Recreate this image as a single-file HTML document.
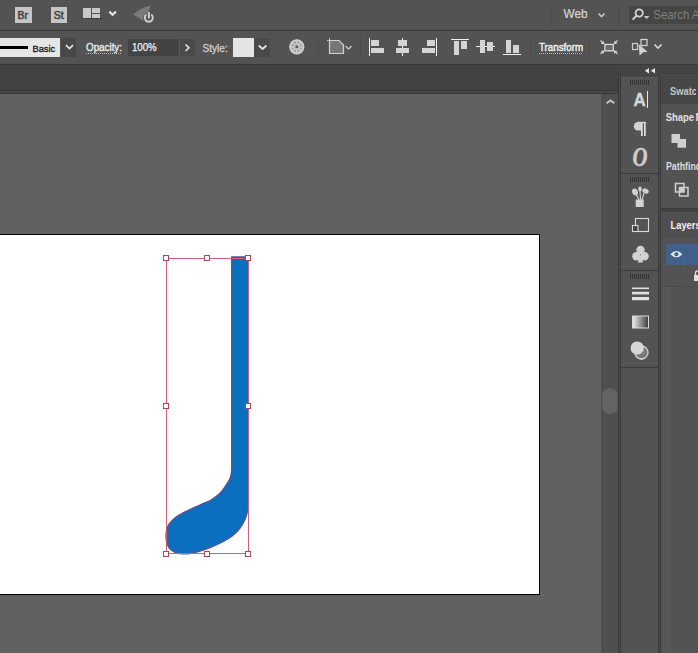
<!DOCTYPE html>
<html><head><meta charset="utf-8">
<style>
html,body{margin:0;padding:0;}
body{width:698px;height:653px;overflow:hidden;background:#535353;position:relative;font-family:"Liberation Sans",sans-serif;}
svg{position:absolute;left:0;top:0;display:block;}
.t{font-family:"Liberation Sans",sans-serif;}
</style></head><body>
<svg width="698" height="653" viewBox="0 0 698 653">
<g shape-rendering="crispEdges">
<!-- menubar -->
<rect x="0" y="0" width="698" height="30" fill="#535353"/>
<rect x="0" y="30" width="698" height="1" fill="#383838"/>
<!-- control bar -->
<rect x="0" y="31" width="698" height="33" fill="#535353"/>
<rect x="0" y="64" width="698" height="1" fill="#383838"/>
<!-- tab bar -->
<rect x="0" y="65" width="698" height="25" fill="#424242"/>
<rect x="0" y="90" width="618" height="1" fill="#393939"/>
<rect x="0" y="91" width="618" height="2" fill="#474747"/>
<rect x="0" y="93" width="618" height="1" fill="#383838"/>
<!-- canvas -->
<rect x="0" y="94" width="601" height="559" fill="#616161"/>
<!-- scroll track -->
<rect x="601" y="94" width="17" height="559" fill="#4f4f4f"/>
<rect x="618" y="94" width="3" height="559" fill="#3b3b3b"/>
</g>

<!-- menubar items -->
<rect x="15" y="7" width="17" height="16" fill="#c6c6c6"/>
<text x="17.6" y="19" font-family="Liberation Sans" font-size="11.5" fill="#474747" stroke="#474747" stroke-width="0.6" textLength="10.4" lengthAdjust="spacingAndGlyphs">Br</text>
<rect x="51" y="7" width="16" height="16" fill="#c6c6c6"/>
<text x="53.8" y="19" font-family="Liberation Sans" font-size="11.5" fill="#474747" stroke="#474747" stroke-width="0.6" textLength="10" lengthAdjust="spacingAndGlyphs">St</text>
<g fill="#c8c8c8" shape-rendering="crispEdges">
<rect x="83" y="8" width="8" height="10"/>
<rect x="92" y="8" width="8" height="5"/>
<rect x="92" y="14" width="8" height="4"/>
<rect x="81" y="18" width="22" height="1" fill="#3e3e3e"/>
</g>
<path d="M109.3,11.6 L112.6,14.8 L115.9,11.6" fill="none" stroke="#e0e0e0" stroke-width="2.2"/>
<!-- gpu icon -->
<path d="M133,14.5 Q142,7 150.5,5.5 Q149,12 143,21 L138,17.5 Z" fill="#7a7a7a"/>
<circle cx="148.8" cy="18" r="3.9" fill="none" stroke="#535353" stroke-width="3.5"/><path d="M146.4,14.6 A4,4 0 1 0 151.2,14.6" fill="none" stroke="#cfcfcf" stroke-width="1.9"/>
<rect x="147.9" y="12" width="1.9" height="6.5" fill="#d4d4d4"/>
<!-- workspace -->
<text x="563.5" y="18" font-family="Liberation Sans" font-size="12.5" fill="#d8d8d8" stroke="#d8d8d8" stroke-width="0.2" textLength="24" lengthAdjust="spacingAndGlyphs">Web</text>
<path d="M598.5,13.5 L601.5,16.5 L604.5,13.5" fill="none" stroke="#c8c8c8" stroke-width="1.6"/>
<rect x="550" y="4" width="1" height="22" fill="#4a4a4a"/>
<rect x="618" y="4" width="1" height="22" fill="#4a4a4a"/>
<!-- search -->
<rect x="629" y="6" width="69" height="18" fill="#454545"/>
<circle cx="639.2" cy="13" r="3.6" fill="none" stroke="#d4d4d4" stroke-width="1.8"/>
<path d="M636.6,15.6 L632.6,19.6" stroke="#d4d4d4" stroke-width="2"/>
<path d="M643.8,16 L649.6,16 L646.7,19 Z" fill="#c8c8c8"/>
<text x="653.3" y="19.2" font-family="Liberation Sans" font-size="13" fill="#7e7e7e" textLength="52.5" lengthAdjust="spacingAndGlyphs">Search Ad</text>

<!-- control bar -->
<rect x="0" y="38" width="60" height="19" fill="#e6e6e6"/>
<rect x="0" y="46" width="28" height="3" fill="#000"/>
<text x="32.5" y="51.6" font-family="Liberation Sans" font-size="9.8" fill="#111" stroke="#111" stroke-width="0.3" textLength="22.6" lengthAdjust="spacingAndGlyphs">Basic</text>
<rect x="61" y="38" width="15" height="19" fill="#484848"/>
<path d="M66,45.2 L69.5,48.6 L73,45.2" fill="none" stroke="#e0e0e0" stroke-width="1.8"/>
<text x="86" y="51.2" font-family="Liberation Sans" font-size="10.8" fill="#e4e4e4" stroke="#e4e4e4" stroke-width="0.45" textLength="36" lengthAdjust="spacingAndGlyphs">Opacity:</text>
<path d="M86,53.5 L122,53.5" stroke="#bdbdbd" stroke-width="1" stroke-dasharray="1,1"/>
<rect x="128" y="39" width="51" height="17" fill="#434343"/>
<rect x="179" y="39" width="1" height="17" fill="#5a5a5a"/>
<rect x="180" y="39" width="15" height="17" fill="#4a4a4a"/>
<text x="132" y="51.2" font-family="Liberation Sans" font-size="10.8" fill="#f2f2f2" stroke="#f2f2f2" stroke-width="0.25" textLength="24.7" lengthAdjust="spacingAndGlyphs">100%</text>
<path d="M185.5,44.5 L189,47.8 L185.5,51" fill="none" stroke="#e0e0e0" stroke-width="1.6"/>
<text x="202.5" y="51.8" font-family="Liberation Sans" font-size="10.8" fill="#c8c8c8" stroke="#c8c8c8" stroke-width="0.4" textLength="25.2" lengthAdjust="spacingAndGlyphs">Style:</text>
<rect x="233" y="38" width="21" height="19" fill="#e4e4e4"/>
<rect x="254" y="38" width="16" height="19" fill="#4a4a4a"/>
<path d="M258.8,45.5 L262.6,49 L266.4,45.5" fill="none" stroke="#e0e0e0" stroke-width="1.9"/>
<!-- recolor globe -->
<circle cx="296.8" cy="46.8" r="7.6" fill="#cfcfcf"/>
<circle cx="296.8" cy="46.8" r="5.8" fill="#a8a8a8"/>
<g stroke="#cfcfcf" stroke-width="1.3">
<path d="M296.8,39.5 V54.1 M289.5,46.8 H304.1 M291.6,41.6 L302,52 M302,41.6 L291.6,52"/>
</g>
<circle cx="296.8" cy="46.8" r="1.5" fill="#555"/>
<!-- separators -->
<rect x="318" y="36" width="1" height="23" fill="#4c4c4c"/>
<!-- doc setup icon -->
<path d="M329.5,40.5 H339 L343.5,45 V53.5 H329.5 Z" fill="#777" stroke="#d0d0d0" stroke-width="1.2"/>
<path d="M327,40.5 H329.5 M329.5,38 V40.5" stroke="#c0c0c0" stroke-width="1"/>
<path d="M345.5,46 L348.5,49 L351.5,46" fill="none" stroke="#c8c8c8" stroke-width="1.4"/>
<rect x="360" y="36" width="1" height="23" fill="#4c4c4c"/>
<!-- align icons -->
<g fill="#d4d4d4" shape-rendering="crispEdges">
<rect x="369" y="38" width="1" height="18" fill="#f0f0f0"/>
<rect x="371" y="40" width="8" height="6"/>
<rect x="371" y="48" width="13" height="5"/>
<rect x="402" y="38" width="1" height="18" fill="#f0f0f0"/>
<rect x="398" y="40" width="9" height="6"/>
<rect x="396" y="48" width="13" height="5"/>
<rect x="436" y="38" width="1" height="18" fill="#f0f0f0"/>
<rect x="427" y="40" width="8" height="6"/>
<rect x="422" y="48" width="13" height="5"/>
<rect x="451" y="39" width="18" height="1" fill="#f0f0f0"/>
<rect x="454" y="41" width="5" height="14"/>
<rect x="461" y="41" width="6" height="8"/>
<rect x="476" y="46" width="19" height="1" fill="#f0f0f0"/>
<rect x="480" y="40" width="5" height="13"/>
<rect x="487" y="42" width="6" height="9"/>
<rect x="503" y="54" width="18" height="1" fill="#f0f0f0"/>
<rect x="506" y="40" width="5" height="13"/>
<rect x="513" y="45" width="6" height="8"/>
</g>
<rect x="530" y="36" width="1" height="23" fill="#4c4c4c"/>
<text x="539" y="51.2" font-family="Liberation Sans" font-size="10.8" fill="#f0f0f0" stroke="#f0f0f0" stroke-width="0.45" textLength="44" lengthAdjust="spacingAndGlyphs">Transform</text>
<path d="M539,53.5 L583,53.5" stroke="#bdbdbd" stroke-width="1" stroke-dasharray="1,1"/>
<rect x="589" y="36" width="1" height="23" fill="#4c4c4c"/>
<!-- isolate icon -->
<rect x="604.9" y="44.4" width="8.4" height="6.4" fill="#6a6a6a" stroke="#dadada" stroke-width="1.3"/>
<g stroke="#cfcfcf" stroke-width="1.2">
<path d="M600.5,40.5 L603.5,43.5 M617.5,40.5 L614.5,43.5 M600.5,54 L603.5,51 M617.5,54 L614.5,51"/>
</g>
<g fill="#d6d6d6">
<path d="M604.3,44.3 L600.8,43.8 L603.8,40.8 Z"/>
<path d="M613.9,44.3 L617.4,43.8 L614.4,40.8 Z"/>
<path d="M604.3,50.4 L600.8,50.9 L603.8,53.9 Z"/>
<path d="M613.9,50.4 L617.4,50.9 L614.4,53.9 Z"/>
</g>
<!-- transform each icon -->
<rect x="632.5" y="43.5" width="5" height="6" fill="none" stroke="#d0d0d0" stroke-width="1.2"/>
<rect x="641" y="39.5" width="6" height="6" fill="none" stroke="#d8d8d8" stroke-width="1.2"/>
<path d="M638.6,44 L647.5,51.8 L643.2,52.2 L639.6,55.6 Z" fill="#d2d2d2"/>
<path d="M654.5,44.5 L658,48 L661.5,44.5" fill="none" stroke="#d8d8d8" stroke-width="1.6"/>

<!-- dock header -->
<rect x="618" y="65" width="80" height="12" fill="#444444"/>
<path d="M649,68 L644.8,70.7 L649,73.4 Z M655,68 L650.8,70.7 L655,73.4 Z" fill="#e4e4e4"/>
<!-- dock col frame -->
<rect x="618" y="72" width="1" height="581" fill="#3a3a3a"/>
<rect x="619" y="72" width="1" height="581" fill="#4a4a4a"/>
<rect x="620" y="72" width="1" height="581" fill="#3a3a3a"/>
<rect x="621" y="77" width="37" height="576" fill="#535353"/>
<rect x="658" y="76" width="1" height="577" fill="#3a3a3a"/>
<rect x="659" y="76" width="1" height="577" fill="#4a4a4a"/>
<rect x="660" y="76" width="1" height="577" fill="#3a3a3a"/>
<rect x="661" y="75" width="37" height="1" fill="#4e4e4e"/>
<rect x="621" y="77" width="37" height="1" fill="#5a5a5a"/>
<rect x="621" y="169" width="37" height="1" fill="#5a5a5a"/>
<rect x="621" y="173" width="37" height="1" fill="#3c3c3c"/>
<rect x="621" y="266" width="37" height="1" fill="#5a5a5a"/>
<rect x="621" y="270" width="37" height="1" fill="#3c3c3c"/>
<rect x="621" y="363" width="37" height="1" fill="#5a5a5a"/>
<rect x="621" y="367" width="37" height="1" fill="#3c3c3c"/>
<g fill="#343434" shape-rendering="crispEdges"><rect x="630" y="80" width="1" height="5"/><rect x="632" y="80" width="1" height="5"/><rect x="634" y="80" width="1" height="5"/><rect x="636" y="80" width="1" height="5"/><rect x="638" y="80" width="1" height="5"/><rect x="640" y="80" width="1" height="5"/><rect x="642" y="80" width="1" height="5"/><rect x="644" y="80" width="1" height="5"/><rect x="646" y="80" width="1" height="5"/><rect x="648" y="80" width="1" height="5"/></g><g fill="#343434" shape-rendering="crispEdges"><rect x="630" y="177" width="1" height="5"/><rect x="632" y="177" width="1" height="5"/><rect x="634" y="177" width="1" height="5"/><rect x="636" y="177" width="1" height="5"/><rect x="638" y="177" width="1" height="5"/><rect x="640" y="177" width="1" height="5"/><rect x="642" y="177" width="1" height="5"/><rect x="644" y="177" width="1" height="5"/><rect x="646" y="177" width="1" height="5"/><rect x="648" y="177" width="1" height="5"/></g><g fill="#343434" shape-rendering="crispEdges"><rect x="630" y="274" width="1" height="5"/><rect x="632" y="274" width="1" height="5"/><rect x="634" y="274" width="1" height="5"/><rect x="636" y="274" width="1" height="5"/><rect x="638" y="274" width="1" height="5"/><rect x="640" y="274" width="1" height="5"/><rect x="642" y="274" width="1" height="5"/><rect x="644" y="274" width="1" height="5"/><rect x="646" y="274" width="1" height="5"/><rect x="648" y="274" width="1" height="5"/></g>
<!-- right panel -->
<rect x="661" y="77" width="37" height="576" fill="#535353"/>
<rect x="661" y="77" width="37" height="27" fill="#474747"/>
<text x="670" y="94.6" font-family="Liberation Sans" font-weight="bold" font-size="10.8" fill="#c4c4c4" textLength="43" lengthAdjust="spacingAndGlyphs">Swatches</text>
<rect x="696" y="78" width="2" height="26" fill="#474747"/>
<text x="665.7" y="120.8" font-family="Liberation Sans" font-weight="bold" font-size="11" fill="#e2e2e2" textLength="28.3" lengthAdjust="spacingAndGlyphs">Shape</text><text x="695.5" y="120.8" font-family="Liberation Sans" font-weight="bold" font-size="11" fill="#e2e2e2">M</text>
<text x="666" y="169.8" font-family="Liberation Sans" font-weight="bold" font-size="10.6" fill="#dcdcdc" textLength="48.4" lengthAdjust="spacingAndGlyphs">Pathfinders</text>
<rect x="661" y="208" width="37" height="1" fill="#383838"/>
<rect x="661" y="209" width="37" height="3" fill="#474747"/>
<rect x="661" y="210" width="37" height="1" fill="#3d3d3d"/>
<rect x="661" y="212" width="37" height="26" fill="#4f4f4f"/>
<text x="670.6" y="228.6" font-family="Liberation Sans" font-weight="bold" font-size="10.8" fill="#f2f2f2" textLength="30" lengthAdjust="spacingAndGlyphs">Layers</text>
<rect x="666" y="244" width="32" height="21" fill="#41618a"/>
<rect x="665" y="265" width="33" height="22" fill="#535353"/>
<rect x="665" y="286" width="33" height="1" fill="#4a4a4a"/>
<rect x="687" y="244" width="1" height="21" fill="#3f5c84"/><rect x="687" y="265" width="1" height="22" fill="#4f4f4f"/>
<rect x="662" y="287" width="9" height="366" fill="#575757"/>

<!-- scrollbar -->
<path d="M606.6,103.2 L610.5,100.4 L614.4,103.2" fill="none" stroke="#c4c4c4" stroke-width="2"/>
<rect x="602.5" y="388.5" width="15" height="25.5" rx="6.5" ry="6.5" fill="#646464" stroke="#5a5a5a" stroke-width="1"/>
<!-- dock icons group1 -->
<text x="633.4" y="106" font-family="Liberation Sans" font-weight="bold" font-size="18" fill="#d4d4d4" stroke="#d4d4d4" stroke-width="0.4" stroke-linejoin="round" textLength="12.2" lengthAdjust="spacingAndGlyphs">A</text>
<rect x="647" y="91" width="1" height="17" fill="#e8e8e8"/>
<path d="M641.5,122 H638 A4.2,4.25 0 0 0 638,130.5 H641.5 Z" fill="#d2d2d2"/>
<rect x="637" y="121.8" width="8.6" height="1.3" fill="#d8d8d8"/>
<rect x="641" y="122" width="1.7" height="14" fill="#e0e0e0"/>
<rect x="644" y="122" width="1.7" height="14" fill="#e0e0e0"/>
<text x="632.5" y="165.6" font-family="Liberation Serif" font-style="italic" font-weight="bold" font-size="26.5" fill="#cfcfcf" stroke="#cfcfcf" stroke-width="0.4" textLength="15" lengthAdjust="spacingAndGlyphs">O</text>
<!-- group2 -->
<rect x="635.7" y="199.5" width="8" height="7.5" fill="#d4d4d4"/>
<ellipse cx="635" cy="192" rx="2.8" ry="3.6" transform="rotate(-25 635 192)" fill="#d0d0d0"/>
<ellipse cx="640" cy="189" rx="1.8" ry="2.4" fill="#d0d0d0"/>
<ellipse cx="645.5" cy="191" rx="3.3" ry="2.5" transform="rotate(20 645.5 191)" fill="#d0d0d0"/>
<path d="M636,194 L639,200 M640,191 L640.5,200 M644,193 L642,200" stroke="#cfcfcf" stroke-width="1.2"/>
<rect x="635.5" y="218.5" width="13" height="13" fill="none" stroke="#d8d8d8" stroke-width="1.1"/>
<rect x="632.5" y="225.5" width="5.5" height="6" fill="#444" stroke="#d8d8d8" stroke-width="1.1"/>
<circle cx="640.5" cy="250" r="4.2" fill="#d2d2d2"/>
<circle cx="636.4" cy="256.3" r="4.2" fill="#d2d2d2"/>
<circle cx="644.6" cy="256.3" r="4.2" fill="#d2d2d2"/>
<path d="M639.5,256 L638,262.5 H643 L641.5,256 Z" fill="#d2d2d2"/>
<!-- group3 -->
<rect x="632" y="287.5" width="17" height="1.6" fill="#e0e0e0"/>
<rect x="632" y="291.8" width="17" height="2.6" fill="#e0e0e0"/>
<rect x="632" y="297" width="17" height="3.2" fill="#e0e0e0"/>
<defs><linearGradient id="gr" x1="0" x2="1" y1="0" y2="0"><stop offset="0" stop-color="#f0f0f0"/><stop offset="1" stop-color="#3a3a3a"/></linearGradient></defs>
<rect x="632.5" y="316" width="16" height="12" fill="url(#gr)" stroke="#d8d8d8" stroke-width="1"/>
<circle cx="641.5" cy="352.5" r="6.5" fill="#7a7a7a" stroke="#cfcfcf" stroke-width="1.3"/>
<circle cx="637.2" cy="348" r="6.6" fill="#d6d6d6"/>
<circle cx="641.5" cy="352.5" r="6.5" fill="none" stroke="#cfcfcf" stroke-width="1.3" stroke-dasharray="0 6 14 30"/>
<!-- right panel icons -->
<g fill="#d0d0d0">
<rect x="671.5" y="134" width="8.5" height="9"/>
<rect x="677.5" y="139" width="8.5" height="8.7"/>
</g>
<rect x="675.5" y="183.5" width="8.5" height="8.5" fill="none" stroke="#d0d0d0" stroke-width="1.5"/>
<rect x="679.5" y="187.5" width="8.5" height="8.5" fill="none" stroke="#d0d0d0" stroke-width="1.5"/>
<rect x="679.5" y="187.5" width="4.5" height="4.5" fill="#d0d0d0"/>
<!-- layers eye -->
<path d="M670.4,254.2 Q676.4,248 682.4,254.2 Q676.4,260.4 670.4,254.2 Z" fill="#dce6f0"/>
<circle cx="676.4" cy="254.2" r="2" fill="#41618a"/>
<rect x="694" y="275" width="6" height="6" fill="#e0e0e0"/>
<path d="M695.5,275 V273 Q695.5,271 697.5,271 Q699.5,271 699.5,273 V275" fill="none" stroke="#e0e0e0" stroke-width="1.3"/>
<!-- artboard -->
<g shape-rendering="crispEdges">
<rect x="0" y="234" width="540" height="361" fill="#000"/>
<rect x="0" y="235" width="539" height="359" fill="#fff"/>
</g>

<!-- artwork -->
<path d="M231.7,257 L248.2,257 L248.2,500 C248.10,503.83 248.17,507.67 247.60,511.00 C247.03,514.33 246.12,517.07 244.80,520.00 C243.48,522.93 241.80,525.93 239.70,528.60 C237.60,531.27 235.25,533.68 232.20,536.00 C229.15,538.32 224.98,540.62 221.40,542.50 C217.82,544.38 214.27,545.85 210.70,547.30 C207.13,548.75 203.45,550.17 200.00,551.20 C196.55,552.23 193.00,553.05 190.00,553.50 C187.00,553.95 184.50,554.08 182.00,553.90 C179.50,553.72 177.00,553.23 175.00,552.40 C173.00,551.57 171.33,550.33 170.00,548.90 C168.67,547.47 167.67,545.82 167.00,543.80 C166.33,541.78 166.07,539.13 166.00,536.80 C165.93,534.47 166.07,531.95 166.60,529.80 C167.13,527.65 167.82,525.88 169.20,523.90 C170.58,521.92 172.28,519.90 174.90,517.90 C177.52,515.90 180.75,514.05 184.90,511.90 C189.05,509.75 195.45,506.98 199.80,505.00 C204.15,503.02 208.07,501.60 211.00,500.00 C213.93,498.40 215.57,496.93 217.40,495.40 C219.23,493.87 220.47,492.63 222.00,490.80 C223.53,488.97 225.23,486.53 226.60,484.40 C227.97,482.27 229.38,480.15 230.20,478.00 C231.02,475.85 231.25,473.83 231.50,471.50 C231.75,469.17 231.67,467.58 231.70,464.00 Z" fill="#0b6fc0" stroke="#5a5294" stroke-width="1.3"/>
<g shape-rendering="crispEdges" fill="none" stroke="#d0607a" stroke-width="1">
<rect x="166.5" y="258.5" width="82" height="295"/>
</g>
<g shape-rendering="crispEdges" fill="#fff" stroke="#a8485c" stroke-width="1">
<rect x="163.5" y="255.5" width="5" height="5"/>
<rect x="204.5" y="255.5" width="5" height="5"/>
<rect x="245.5" y="255.5" width="5" height="5"/>
<rect x="163.5" y="403.5" width="5" height="5"/>
<rect x="245.5" y="403.5" width="5" height="5"/>
<rect x="163.5" y="551.5" width="5" height="5"/>
<rect x="204.5" y="551.5" width="5" height="5"/>
<rect x="245.5" y="551.5" width="5" height="5"/>
</g>
</svg>
</body></html>
